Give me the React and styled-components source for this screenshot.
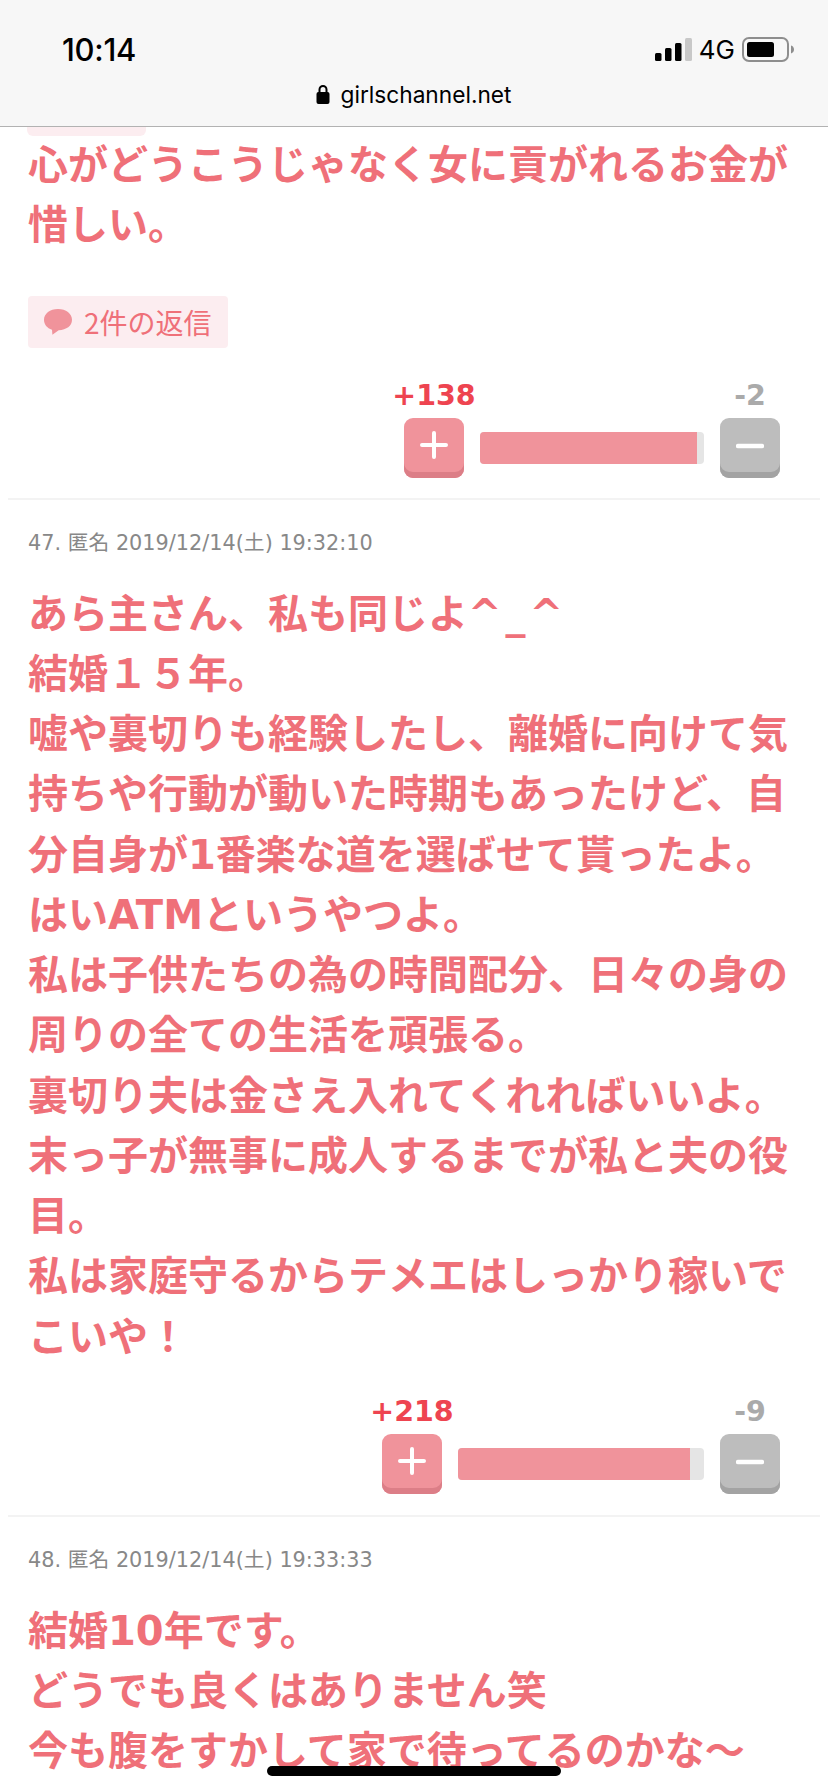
import React from "react";
import styled, { createGlobalStyle } from "styled-components";

const GlobalStyle = createGlobalStyle`
  html, body {
    margin: 0;
    padding: 0;
    background: #fff;
  }
`;

const Page = styled.div`
  position: relative;
  width: 828px;
  height: 1792px;
  overflow: hidden;
  background: #fff;
  font-family: "DejaVu Sans", "Noto Sans CJK JP", sans-serif;
`;

const TopBar = styled.header`
  box-sizing: border-box;
  height: 127px;
  background: #f7f7f7;
  border-bottom: 1px solid #b2b2b2;
  display: flex;
  flex-direction: column;
  font-family: Inter, "Liberation Sans", sans-serif;
  color: #000;
`;

const StatusRow = styled.div`
  display: flex;
  align-items: center;
  justify-content: space-between;
  height: 50px;
  margin-top: 24px;
  padding: 0 34px 0 62px;
`;

const Clock = styled.span`
  font-size: 31px;
  font-weight: 500;
  letter-spacing: -0.3px;
`;

const StatusIcons = styled.div`
  display: flex;
  align-items: center;
  gap: 7px;
`;

const Network = styled.span`
  font-size: 26px;
  font-weight: 400;
`;

const AddressRow = styled.div`
  display: flex;
  align-items: center;
  justify-content: center;
  gap: 10px;
  margin-top: 5px;
  height: 30px;
  font-size: 22.7px;
`;

const ClippedTag = styled.div`
  width: 119px;
  height: 9px;
  margin-left: 27px;
  background: #fcedf0;
  border-radius: 0 0 6px 6px;
`;

const Comment = styled.article`
  margin: 0 8px;
  padding: 0 20px ${(p) => p.$bottom || 0}px;
  border-bottom: ${(p) => (p.$open ? "none" : "2px solid #f3f3f3")};
`;

const Meta = styled.div`
  height: 24px;
  padding-top: 31px;
  font-size: 20.8px;
  line-height: 24px;
  color: #888;
`;

const Body = styled.p`
  margin: ${(p) => p.$top}px 0 0;
  font-size: 40px;
  line-height: 60.25px;
  font-weight: 700;
  color: #ef7079;
`;

const Smiley = styled.span`
  letter-spacing: 4px;
`;

const ReplyTag = styled.div`
  display: flex;
  align-items: center;
  gap: 12px;
  box-sizing: border-box;
  width: 200px;
  height: 52px;
  margin-top: 40px;
  padding-left: 16px;
  background: #fcedf0;
  border-radius: 4px;
  font-size: 28px;
  color: #ef7079;
  font-weight: 400;
  font-family: "Noto Sans CJK JP", sans-serif;
`;

const VoteRow = styled.div`
  display: flex;
  justify-content: flex-end;
  align-items: flex-end;
  gap: 16px;
  padding-right: 20px;
  margin-top: ${(p) => p.$top}px;
`;

const VoteCol = styled.div`
  display: flex;
  flex-direction: column;
  align-items: center;
  width: 60px;
`;

const Count = styled.span`
  height: 36px;
  margin-bottom: 4px;
  font-size: 28.5px;
  line-height: 36px;
  font-weight: 700;
  white-space: nowrap;
  color: ${(p) => (p.$plus ? "#ee4450" : "#aaa")};
`;

const VoteButton = styled.div`
  box-sizing: border-box;
  display: flex;
  align-items: center;
  justify-content: center;
  width: 60px;
  height: 60px;
  padding-bottom: 6px;
  border-radius: 9px;
  background: ${(p) => (p.$plus ? "#f0939b" : "#bdbdbd")};
  box-shadow: inset 0 -6px 0 ${(p) => (p.$plus ? "#dc7e87" : "#a3a3a3")};
`;

const RatioBar = styled.div`
  width: ${(p) => p.$width}px;
  height: 32px;
  margin-bottom: 14px;
  background: #e5e5e5;
  border-radius: 4px;
  overflow: hidden;
`;

const RatioFill = styled.div`
  height: 100%;
  background: #f0939b;
`;

const HomeIndicator = styled.div`
  position: absolute;
  left: 267px;
  bottom: 16px;
  width: 294px;
  height: 10px;
  border-radius: 5px;
  background: #000;
`;

const SignalIcon = () => (
  <svg width="37" height="23" viewBox="0 0 37 23">
    <rect x="0" y="15" width="6.5" height="8" rx="1.5" fill="#000" />
    <rect x="10" y="10" width="6.5" height="13" rx="1.5" fill="#000" />
    <rect x="20" y="5" width="6.5" height="18" rx="1.5" fill="#000" />
    <rect x="30" y="0" width="7" height="23" rx="1.5" fill="#c8c8c8" />
  </svg>
);

const BatteryIcon = () => (
  <svg width="52" height="25" viewBox="0 0 52 25">
    <rect x="1" y="1" width="45" height="23" rx="6" fill="none" stroke="#8e8e8e" strokeWidth="2" />
    <rect x="5" y="5" width="27" height="15" rx="2.5" fill="#000" />
    <path d="M49 8.5c2 .6 3 2.2 3 4s-1 3.4-3 4z" fill="#8e8e8e" />
  </svg>
);

const LockIcon = () => (
  <svg width="14" height="20" viewBox="0 0 14 20">
    <path d="M3.5 9V5.500a3.500 3.500 0 0 1 7 0V9" fill="none" stroke="#000" strokeWidth="2" />
    <rect x="0.5" y="8" width="13" height="12" rx="2" fill="#000" />
  </svg>
);

const BubbleIcon = () => (
  <svg width="28" height="26" viewBox="0 0 28 26">
    <path
      d="M14 0C6 0 0 4.600 0 10.800c0 4.600 3 8.400 8 10l0.400 4.900 6.300-4.500C22.500 21 28 16.800 28 10.800 28 4.600 22 0 14 0z"
      fill="#f0939b"
    />
  </svg>
);

const PlusIcon = () => (
  <svg width="28" height="28" viewBox="0 0 28 28">
    <path d="M2 14h24M14 2v24" stroke="#fff" strokeWidth="4" strokeLinecap="round" />
  </svg>
);

const MinusIcon = () => (
  <svg width="28" height="28" viewBox="0 0 28 28">
    <path d="M2 15h24" stroke="#fff" strokeWidth="4.500" strokeLinecap="round" />
  </svg>
);

const Vote = ({ plus, minus, barWidth, fill, top }) => (
  <VoteRow $top={top}>
    <VoteCol>
      <Count $plus>+{plus}</Count>
      <VoteButton $plus>
        <PlusIcon />
      </VoteButton>
    </VoteCol>
    <RatioBar $width={barWidth}>
      <RatioFill style={{ width: `${fill}%` }} />
    </RatioBar>
    <VoteCol>
      <Count>-{minus}</Count>
      <VoteButton>
        <MinusIcon />
      </VoteButton>
    </VoteCol>
  </VoteRow>
);

const Lines = ({ lines }) =>
  lines.map((line, i) => (
    <React.Fragment key={i}>
      {line}
      {i < lines.length - 1 && <br />}
    </React.Fragment>
  ));

const comment47 = [
  <>
    あら主さん、私も同じよ<Smiley>^_^</Smiley>
  </>,
  "結婚１５年。",
  "嘘や裏切りも経験したし、離婚に向けて気持ちや行動が動いた時期もあったけど、自分自身が1番楽な道を選ばせて貰ったよ。",
  "はいATMというやつよ。",
  "私は子供たちの為の時間配分、日々の身の周りの全ての生活を頑張る。",
  "裏切り夫は金さえ入れてくれればいいよ。",
  "末っ子が無事に成人するまでが私と夫の役目。",
  "私は家庭守るからテメエはしっかり稼いでこいや！",
];

const comment48 = ["結婚10年です。", "どうでも良くはありません笑", "今も腹をすかして家で待ってるのかな〜"];

export default function App() {
  return (
    <Page>
      <GlobalStyle />
      <TopBar>
        <StatusRow>
          <Clock>10:14</Clock>
          <StatusIcons>
            <SignalIcon />
            <Network>4G</Network>
            <BatteryIcon />
          </StatusIcons>
        </StatusRow>
        <AddressRow>
          <LockIcon />
          <span>girlschannel.net</span>
        </AddressRow>
      </TopBar>
      <ClippedTag />

      <Comment $bottom={20}>
        <Body $top={-1}>心がどうこうじゃなく女に貢がれるお金が惜しい。</Body>
        <ReplyTag>
          <BubbleIcon />
          2件の返信
        </ReplyTag>
        <Vote plus={138} minus={2} barWidth={224} fill={96.9} top={30} />
      </Comment>

      <Comment $bottom={21}>
        <Meta>47. 匿名 2019/12/14(土) 19:32:10</Meta>
        <Body $top={29}>
          <Lines lines={comment47} />
        </Body>
        <Vote plus={218} minus={9} barWidth={246} fill={94.3} top={27} />
      </Comment>

      <Comment $open>
        <Meta>48. 匿名 2019/12/14(土) 19:33:33</Meta>
        <Body $top={29}>
          <Lines lines={comment48} />
        </Body>
      </Comment>

      <HomeIndicator />
    </Page>
  );
}
